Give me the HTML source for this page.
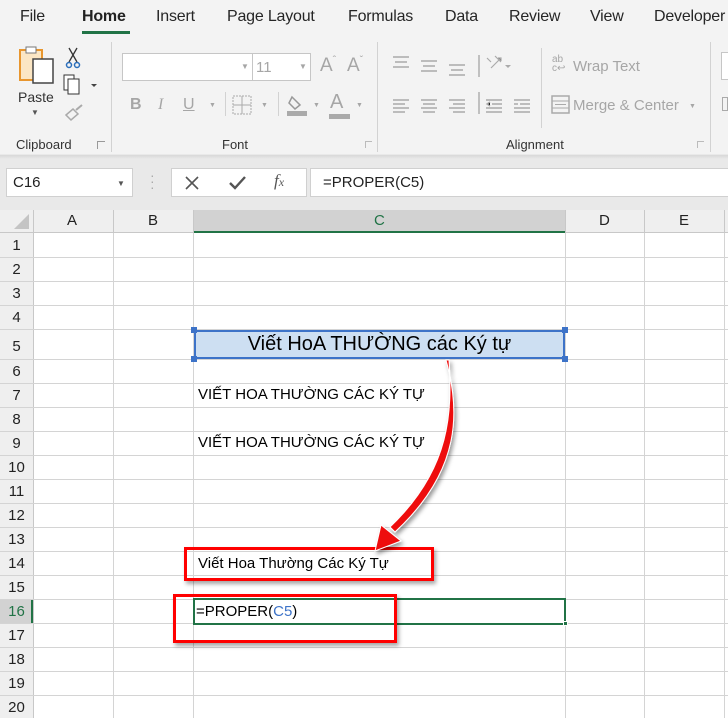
<!DOCTYPE html>
<html><head><meta charset="utf-8"><style>
*{margin:0;padding:0;box-sizing:border-box}
body{width:728px;height:718px;overflow:hidden;background:#fff;font-family:"Liberation Sans",sans-serif;position:relative}
.a{position:absolute}
.tab{position:absolute;top:8px;font-size:16px;color:#262626;letter-spacing:-0.2px}
.g{color:#a6a6a6}
.lbl{position:absolute;top:137px;font-size:13px;color:#333}
.cell{position:absolute;font-family:"Liberation Sans Narrow","Liberation Sans",sans-serif;font-size:15px;color:#000}
.rh{position:absolute;left:0;width:33px;text-align:center;font-size:15px;color:#222;font-family:"Liberation Sans Narrow","Liberation Sans",sans-serif}
</style></head><body>
<!-- ribbon bg -->
<div class="a" style="left:0;top:0;width:728px;height:156px;background:#f3f3f3"></div>
<div class="a" style="left:0;top:154px;width:728px;height:56px;background:#e9e9e9"></div>
<div class="a" style="left:0;top:155px;width:728px;height:4px;background:linear-gradient(#d8d8d8,#e9e9e9)"></div>
<div class="tab" style="left:20px">File</div>
<div class="tab" style="left:82px;font-weight:bold;color:#222">Home</div>
<div class="a" style="left:82px;top:31px;width:48px;height:3px;background:#217346"></div>
<div class="tab" style="left:156px">Insert</div>
<div class="tab" style="left:227px">Page Layout</div>
<div class="tab" style="left:348px">Formulas</div>
<div class="tab" style="left:445px">Data</div>
<div class="tab" style="left:509px">Review</div>
<div class="tab" style="left:590px">View</div>
<div class="tab" style="left:654px">Developer</div>
<!-- clipboard -->
<svg class="a" style="left:17px;top:45px" width="40" height="40"><rect x="3" y="5" width="22" height="30" fill="#fbe6c4" stroke="#e8962e" stroke-width="2"/><rect x="9" y="2" width="10" height="6" fill="#fff" stroke="#777"/><rect x="16" y="14" width="20" height="24" fill="#fff" stroke="#444" stroke-width="1.5"/></svg>
<div class="a" style="left:18px;top:89px;font-size:14px;color:#333">Paste</div>
<div class="a" style="left:31px;top:108px;font-size:8px;color:#555">▼</div>
<svg class="a" style="left:64px;top:46px" width="20" height="24"><path d="M5 2 L13 16 M13 2 L5 16" stroke="#333" stroke-width="1.3"/><circle cx="5" cy="19" r="2.5" fill="none" stroke="#2a6ebb" stroke-width="1.5"/><circle cx="13" cy="19" r="2.5" fill="none" stroke="#2a6ebb" stroke-width="1.5"/></svg>
<svg class="a" style="left:63px;top:74px" width="36" height="22"><rect x="1" y="1" width="10" height="15" fill="#fff" stroke="#333"/><rect x="5" y="5" width="11" height="15" fill="#fff" stroke="#333"/><path d="M28 10l3 3 3-3z" fill="#444"/></svg>
<svg class="a" style="left:63px;top:103px" width="22" height="20"><path d="M3 12 L10 6 L15 11 L8 17z" fill="none" stroke="#aaa" stroke-width="1.5"/><path d="M13 7 L19 2" stroke="#aaa" stroke-width="2"/></svg>
<div class="lbl" style="left:16px">Clipboard</div>
<div class="a" style="left:97px;top:141px;width:8px;height:8px;border-left:1px solid #999;border-top:1px solid #999"></div>
<div class="a" style="left:111px;top:42px;width:1px;height:110px;background:#d2d2d2"></div>
<!-- font -->
<div class="a" style="left:122px;top:53px;width:189px;height:28px;background:#fff;border:1px solid #c6c6c6"></div>
<div class="a" style="left:252px;top:53px;width:1px;height:28px;background:#c6c6c6"></div>
<div class="a g" style="left:241px;top:62px;font-size:8px">▼</div>
<div class="a g" style="left:299px;top:62px;font-size:8px">▼</div>
<div class="a g" style="left:256px;top:59px;font-size:15px">11</div>
<div class="a g" style="left:320px;top:55px;font-size:19px">A<span style="font-size:10px;vertical-align:top">ˆ</span></div>
<div class="a g" style="left:347px;top:55px;font-size:19px">A<span style="font-size:10px;vertical-align:top">ˇ</span></div>
<div class="a g" style="left:130px;top:96px;font-size:16px;font-weight:bold">B</div>
<div class="a g" style="left:158px;top:96px;font-size:16px;font-style:italic;font-family:'Liberation Serif'">I</div>
<div class="a g" style="left:183px;top:96px;font-size:16px;text-decoration:underline">U</div>
<div class="a g" style="left:209px;top:102px;font-size:7px">▼</div>
<div class="a" style="left:225px;top:92px;width:1px;height:24px;background:#d2d2d2"></div>
<svg class="a" style="left:232px;top:95px" width="22" height="20"><rect x="1" y="1" width="18" height="18" fill="none" stroke="#aaa" stroke-dasharray="2 1"/><path d="M10 1V19M1 10H19" stroke="#aaa"/></svg>
<div class="a g" style="left:261px;top:102px;font-size:7px">▼</div>
<div class="a" style="left:278px;top:92px;width:1px;height:24px;background:#d2d2d2"></div>
<svg class="a" style="left:286px;top:93px" width="22" height="24"><path d="M6 4 L14 12 L9 16 L3 10z" fill="none" stroke="#999" stroke-width="1.5"/><rect x="1" y="18" width="20" height="5" fill="#aaa"/></svg>
<div class="a g" style="left:313px;top:102px;font-size:7px">▼</div>
<div class="a g" style="left:330px;top:91px;font-size:20px">A</div>
<div class="a" style="left:329px;top:114px;width:21px;height:5px;background:#aaa"></div>
<div class="a g" style="left:356px;top:102px;font-size:7px">▼</div>
<div class="lbl" style="left:222px">Font</div>
<div class="a" style="left:365px;top:141px;width:7px;height:7px;border-left:1px solid #bbb;border-top:1px solid #bbb"></div>
<div class="a" style="left:377px;top:42px;width:1px;height:110px;background:#d2d2d2"></div>
<!-- alignment -->
<svg class="a" style="left:390px;top:52px" width="180" height="70" stroke="#aaa" stroke-width="1.4">
<path d="M3 5h16M5 10h12M3 15h16"/><path d="M31 9h16M33 14h12M31 19h16"/><path d="M59 13h16M61 18h12M59 23h16"/>
<path d="M89 3v22"/>
<path d="M97 6l4 4m4-6l6 6M101 16l10-10m-3 0h3v3" stroke-width="1.2"/><path d="M115 13l3 3 3-3" fill="#aaa" stroke="none"/>
<path d="M3 48h16M3 52h12M3 56h16M3 60h12"/><path d="M31 48h16M33 52h12M31 56h16M33 60h12"/><path d="M59 48h16M63 52h12M59 56h16M63 60h12"/>
<path d="M89 40v22"/>
<path d="M96 48h16M102 52h10M96 56h16M96 60h16M100 50l-3 2 3 2"/><path d="M124 48h16M130 52h10M124 56h16M124 60h16M124 52h4"/>
</svg>
<div class="a" style="left:541px;top:48px;width:1px;height:80px;background:#d2d2d2"></div>
<div class="a g" style="left:552px;top:55px;font-size:10px;line-height:9px">ab<br>c↩</div>
<div class="a g" style="left:573px;top:58px;font-size:15px">Wrap Text</div>
<svg class="a" style="left:551px;top:95px" width="19" height="19"><rect x="1" y="1" width="17" height="17" fill="none" stroke="#aaa" stroke-width="1.5"/><path d="M1 6h17M1 13h17M4 9.5h11" stroke="#aaa"/></svg>
<div class="a g" style="left:573px;top:97px;font-size:15px">Merge &amp; Center</div>
<div class="a g" style="left:689px;top:103px;font-size:7px">▼</div>
<div class="lbl" style="left:506px">Alignment</div>
<div class="a" style="left:697px;top:141px;width:7px;height:7px;border-left:1px solid #bbb;border-top:1px solid #bbb"></div>
<div class="a" style="left:710px;top:42px;width:1px;height:110px;background:#d2d2d2"></div>
<div class="a" style="left:721px;top:52px;width:10px;height:28px;background:#fff;border:1px solid #c6c6c6"></div>
<div class="a" style="left:722px;top:97px;width:6px;height:14px;border:1px solid #aaa"></div>
<!-- formula bar -->
<div class="a" style="left:6px;top:168px;width:127px;height:29px;background:#fff;border:1px solid #d0d0d0"></div>
<div class="a" style="left:13px;top:174px;font-size:15px;color:#222">C16</div>
<div class="a" style="left:117px;top:179px;font-size:8px;color:#555">▼</div>
<div class="a" style="left:150px;top:172px;font-size:14px;color:#aaa;line-height:6px">·<br>·<br>·</div>
<div class="a" style="left:171px;top:168px;width:136px;height:29px;background:#fff;border:1px solid #d0d0d0"></div>
<svg class="a" style="left:183px;top:174px" width="20" height="18"><path d="M3 3L15 15M15 3L3 15" stroke="#555" stroke-width="1.6"/></svg>
<svg class="a" style="left:228px;top:174px" width="20" height="18"><path d="M2 9L7 14L17 3" stroke="#555" stroke-width="2.4" fill="none"/></svg>
<div class="a" style="left:274px;top:171px;font-size:17px;font-style:italic;font-family:'Liberation Serif';color:#555">f<span style="font-size:12px">x</span></div>
<div class="a" style="left:310px;top:168px;width:430px;height:29px;background:#fff;border:1px solid #d0d0d0"></div>
<div class="a" style="left:323px;top:174px;font-size:15px;color:#222">=PROPER(C5)</div>
<!-- column headers -->
<div class="a" style="left:0;top:210px;width:728px;height:23px;background:#efefef;border-bottom:1px solid #c8c8c8"></div>
<svg class="a" style="left:10px;top:214px" width="20" height="16"><path d="M19 0V15H4z" fill="#c4c4c4"/></svg>
<div class="a" style="left:193px;top:210px;width:372px;height:23px;background:#d2d2d2;border-bottom:2px solid #217346"></div>
<div class="a" style="left:33px;top:210px;width:1px;height:508px;background:#c8c8c8"></div>
<div class="a" style="left:113px;top:210px;width:1px;height:23px;background:#c8c8c8"></div>
<div class="a" style="left:193px;top:210px;width:1px;height:23px;background:#c8c8c8"></div>
<div class="a" style="left:565px;top:210px;width:1px;height:23px;background:#c8c8c8"></div>
<div class="a" style="left:644px;top:210px;width:1px;height:23px;background:#c8c8c8"></div>
<div class="a" style="left:724px;top:210px;width:1px;height:23px;background:#c8c8c8"></div>
<div class="cell" style="left:67px;top:212px;color:#222">A</div>
<div class="cell" style="left:148px;top:212px;color:#222">B</div>
<div class="cell" style="left:374px;top:212px;color:#217346">C</div>
<div class="cell" style="left:599px;top:212px;color:#222">D</div>
<div class="cell" style="left:679px;top:212px;color:#222">E</div>
<!-- grid -->
<div class="a" style="left:0;top:233px;width:33px;height:485px;background:#efefef"></div>
<div class="a" style="left:0;top:599px;width:33px;height:24px;background:#d2d2d2;border-right:2px solid #217346"></div>
<svg class="a" style="left:0;top:0" width="728" height="718" stroke="#d4d4d4" stroke-width="1">
<g shape-rendering="crispEdges">
<path d="M0 257.5H728M0 281.5H728M0 305.5H728M0 329.5H728M0 359.5H728M0 383.5H728M0 407.5H728M0 431.5H728M0 455.5H728M0 479.5H728M0 503.5H728M0 527.5H728M0 551.5H728M0 575.5H728M0 599.5H728M0 623.5H728M0 647.5H728M0 671.5H728M0 695.5H728"/>
<path d="M113.5 233V718M193.5 233V718M565.5 233V718M644.5 233V718M724.5 233V718"/>
</g></svg>
<div class="rh" style="top:237px">1</div><div class="rh" style="top:261px">2</div><div class="rh" style="top:285px">3</div><div class="rh" style="top:309px">4</div>
<div class="rh" style="top:338px">5</div><div class="rh" style="top:363px">6</div><div class="rh" style="top:387px">7</div><div class="rh" style="top:411px">8</div>
<div class="rh" style="top:435px">9</div><div class="rh" style="top:459px">10</div><div class="rh" style="top:483px">11</div><div class="rh" style="top:507px">12</div>
<div class="rh" style="top:531px">13</div><div class="rh" style="top:555px">14</div><div class="rh" style="top:579px">15</div><div class="rh" style="top:603px;color:#217346">16</div>
<div class="rh" style="top:627px">17</div><div class="rh" style="top:651px">18</div><div class="rh" style="top:675px">19</div><div class="rh" style="top:699px">20</div>
<!-- C5 -->
<div class="a" style="left:194px;top:330px;width:371px;height:29px;background:#cddff2;border:2px solid #3d73c8"></div>
<div class="a" style="left:191px;top:327px;width:6px;height:6px;background:#3d73c8"></div>
<div class="a" style="left:562px;top:327px;width:6px;height:6px;background:#3d73c8"></div>
<div class="a" style="left:191px;top:356px;width:6px;height:6px;background:#3d73c8"></div>
<div class="a" style="left:562px;top:356px;width:6px;height:6px;background:#3d73c8"></div>
<div class="cell" style="left:194px;width:371px;top:333px;text-align:center;font-size:20px">Viết HoA THƯỜNG các Ký tự</div>
<div class="cell" style="left:198px;top:386px">VIẾT HOA THƯỜNG CÁC KÝ TỰ</div>
<div class="cell" style="left:198px;top:434px">VIẾT HOA THƯỜNG CÁC KÝ TỰ</div>
<div class="cell" style="left:198px;top:555px">Viết Hoa Thường Các Ký Tự</div>
<div class="a" style="left:193px;top:598px;width:373px;height:27px;border:2px solid #217346"></div>
<div class="a" style="left:563px;top:621px;width:5px;height:5px;background:#217346;border:1px solid #fff"></div>
<div class="cell" style="left:196px;top:603px">=PROPER(<span style="color:#3d73c8">C5</span>)</div>
<!-- red boxes -->
<div class="a" style="left:184px;top:547px;width:250px;height:34px;border:3px solid #ff0000;box-shadow:2px 3px 4px rgba(0,0,0,.35)"></div>
<div class="a" style="left:173px;top:594px;width:224px;height:49px;border:3px solid #ff0000;box-shadow:2px 3px 4px rgba(0,0,0,.35)"></div>
<!-- arrow -->
<svg class="a" style="left:0;top:0" width="728" height="718">
<defs><filter id="s"><feDropShadow dx="2" dy="3" stdDeviation="2" flood-opacity="0.4"/></filter></defs>
<g filter="url(#s)">
<path d="M446 360 C460 410 462 470 395 532 L390 527 C452 468 452 410 449 360Z" fill="#ee1111" stroke="#fff" stroke-width="1"/>
<path d="M375 551 L381 525 L401 541Z" fill="#ee1111" stroke="#fff" stroke-width="1"/>
</g></svg>
</body></html>
